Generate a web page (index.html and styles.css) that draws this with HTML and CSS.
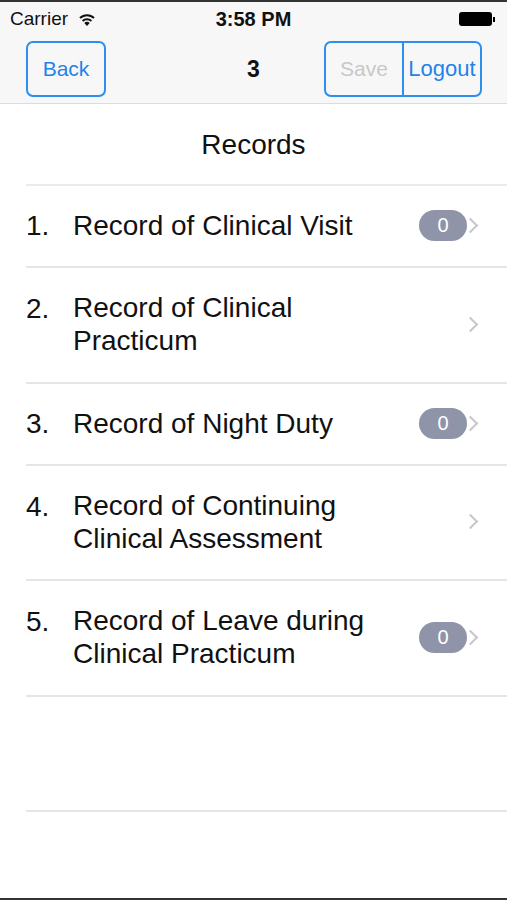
FILE: index.html
```html
<!DOCTYPE html>
<html lang="en">
<head>
  <meta charset="UTF-8">
  <meta name="viewport" content="width=device-width, initial-scale=1.0">
  <title>Records</title>
  <link rel="stylesheet" href="styles.css">
</head>
<body>
  <div class="screen">
    <div class="top">
      <div class="status">
        <div class="carrier">
          Carrier
          <svg class="wifi" width="18" height="13" viewBox="0 0 18 13">
            <path d="M9 13 L6.3 9.9 A4 4 0 0 1 11.7 9.9 Z" fill="#111"/>
            <path d="M4.6 8 A6.5 6.5 0 0 1 13.4 8" stroke="#111" stroke-width="2" fill="none"/>
            <path d="M2 5 A10 10 0 0 1 16 5" stroke="#111" stroke-width="2" fill="none"/>
          </svg>
        </div>
        <div class="time">3:58 PM</div>
        <div class="battery"><span class="cell"></span><span class="nub"></span></div>
      </div>
      <div class="nav">
        <button type="button" class="btn">Back</button>
        <div class="nav-title">3</div>
        <div class="seg">
          <button type="button" class="seg-btn disabled">Save</button>
          <button type="button" class="seg-btn">Logout</button>
        </div>
      </div>
    </div>

    <div class="heading">Records</div>

    <ul class="list">
      <li class="row">
        <span class="num">1.</span>
        <span class="label">Record of Clinical Visit</span>
        <span class="badge">0</span>
        <span class="chev"></span>
      </li>
      <li class="row double">
        <span class="num">2.</span>
        <span class="label">Record of Clinical<br>Practicum</span>
        <span class="chev"></span>
      </li>
      <li class="row">
        <span class="num">3.</span>
        <span class="label">Record of Night Duty</span>
        <span class="badge">0</span>
        <span class="chev"></span>
      </li>
      <li class="row double short">
        <span class="num">4.</span>
        <span class="label">Record of Continuing<br>Clinical Assessment</span>
        <span class="chev"></span>
      </li>
      <li class="row double">
        <span class="num">5.</span>
        <span class="label">Record of Leave during<br>Clinical Practicum</span>
        <span class="badge">0</span>
        <span class="chev"></span>
      </li>
      <li class="row empty"></li>
    </ul>
  </div>
</body>
</html>
```
FILE: styles.css
```css
body {
  margin: 0;
  background: #333;
  font-family: "Liberation Sans", Arial, sans-serif;
  color: #111;
}

.screen {
  width: 507px;
  height: 896px;
  margin-top: 2px;
  background: #fff;
  display: flex;
  flex-direction: column;
  overflow: hidden;
}

.top {
  background: #f7f7f7;
  border-bottom: 1px solid #dcdcdc;
  height: 101px;
}

.status {
  height: 34px;
  display: flex;
  align-items: center;
  justify-content: space-between;
  padding: 0 12px 0 10px;
  position: relative;
}

.carrier {
  font-size: 19px;
  display: flex;
  align-items: center;
  gap: 10px;
}

.time {
  font-size: 20px;
  font-weight: bold;
  position: absolute;
  left: 0;
  right: 0;
  text-align: center;
  pointer-events: none;
}

.battery {
  display: flex;
  align-items: center;
}

.battery .cell {
  width: 33px;
  height: 14px;
  background: #000;
  border-radius: 3px;
}

.battery .nub {
  width: 2px;
  height: 5px;
  background: #000;
  margin-left: 1px;
}

.nav {
  height: 67px;
  display: flex;
  align-items: center;
  justify-content: space-between;
  padding: 0 25px 0 26px;
  position: relative;
}

.nav-title {
  position: absolute;
  left: 0;
  right: 0;
  text-align: center;
  font-size: 23px;
  font-weight: bold;
  pointer-events: none;
}

.btn,
.seg {
  height: 56px;
  border: 2px solid #2c8ff0;
  border-radius: 7px;
  box-sizing: border-box;
  background: transparent;
}

.btn {
  width: 80px;
  color: #1f83ea;
  font-size: 21px;
  font-family: inherit;
  padding: 0;
  margin-bottom: 2px;
}

.seg {
  display: flex;
  width: 158px;
  margin-bottom: 2px;
}

.seg-btn {
  flex: 1;
  border: none;
  background: transparent;
  color: #1f83ea;
  font-size: 21px;
  font-family: inherit;
  padding: 0;
}

.seg-btn + .seg-btn {
  border-left: 2px solid #2c8ff0;
  font-size: 22px;
}

.seg-btn.disabled {
  color: #c8c8c8;
}

.heading {
  text-align: center;
  font-size: 28px;
  height: 80px;
  line-height: 82px;
  border-bottom: 2px solid #ebebeb;
  margin-left: 26px;
  padding-right: 26px;
}

.list {
  list-style: none;
  margin: 0;
  padding: 0 0 0 26px;
}

.row {
  display: flex;
  align-items: center;
  height: 82px;
  border-bottom: 2px solid #e5e5e5;
  font-size: 28px;
  line-height: 33px;
  padding: 0 25px 2px 0;
  box-sizing: border-box;
}

.row.double {
  height: 116px;
}

.row.double.short,
.row.empty {
  height: 115px;
}

.num {
  width: 47px;
}

.row.double .num {
  align-self: flex-start;
  padding-top: 24px;
}

.label {
  flex: 1;
}

.badge {
  width: 48px;
  height: 31px;
  border-radius: 16px;
  background: #8f94a8;
  color: #fff;
  font-size: 20px;
  line-height: 31px;
  text-align: center;
}

.chev {
  width: 9px;
  height: 9px;
  border-top: 2px solid #c7c7cc;
  border-right: 2px solid #c7c7cc;
  transform: rotate(45deg);
  margin-left: -2px;
  margin-right: 6px;
}

.row .label + .chev {
  margin-left: 48px;
}
```
